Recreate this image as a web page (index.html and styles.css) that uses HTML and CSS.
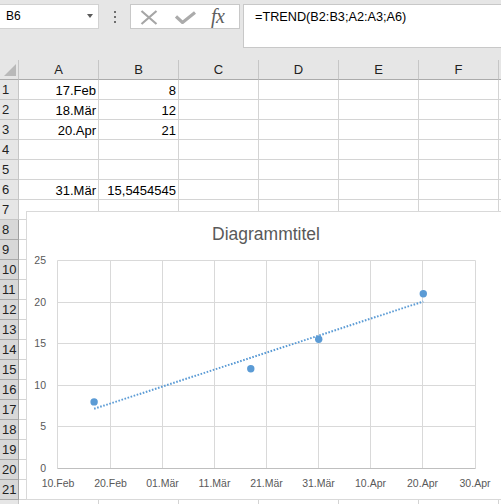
FILE: index.html
```html
<!DOCTYPE html>
<html lang="de">
<head>
<meta charset="utf-8">
<title>Excel TREND</title>
<link rel="stylesheet" href="styles.css">
</head>
<body>
<div class="app">
  <div class="toolbar">
    <div class="namebox">
      <span class="nb-text">B6</span>
      <span class="nb-arrow"></span>
    </div>
    <div class="sep">
      <svg width="4" height="12" viewBox="0 0 4 12"><rect x="1" y="0" width="2" height="2" fill="#6e6e6e"/><rect x="1" y="5" width="2" height="2" fill="#6e6e6e"/><rect x="1" y="10" width="2" height="2" fill="#6e6e6e"/></svg>
    </div>
    <div class="iconbox">
      <svg class="ic-x" width="18" height="15" viewBox="0 0 18 15"><path d="M1.5 1 L16.5 14 M16.5 1 L1.5 14" stroke="#a6a6a6" stroke-width="2.2" fill="none"/></svg>
      <svg class="ic-check" width="21" height="13" viewBox="0 0 21 13"><path d="M1 5.5 L7.5 11.5 L20 1.5" stroke="#ababab" stroke-width="3.2" fill="none"/></svg>
      <span class="ic-fx">fx</span>
    </div>
    <div class="formula">=TREND(B2:B3;A2:A3;A6)</div>
  </div>

  <div class="sheet">
    <div class="grid">
      <div class="corner"><svg width="19" height="19" viewBox="0 0 19 19"><polygon points="4,16 16,16 16,4" fill="#b9b9b9"/></svg></div>
      <div class="ch">A</div><div class="ch">B</div><div class="ch">C</div><div class="ch">D</div><div class="ch">E</div><div class="ch">F</div><div class="ch"></div>

      <div class="rh">1</div><div class="c">17.Feb</div><div class="c">8</div><div class="c"></div><div class="c"></div><div class="c"></div><div class="c"></div><div class="c"></div>
      <div class="rh">2</div><div class="c">18.Mär</div><div class="c">12</div><div class="c"></div><div class="c"></div><div class="c"></div><div class="c"></div><div class="c"></div>
      <div class="rh">3</div><div class="c">20.Apr</div><div class="c">21</div><div class="c"></div><div class="c"></div><div class="c"></div><div class="c"></div><div class="c"></div>
      <div class="rh">4</div><div class="c"></div><div class="c"></div><div class="c"></div><div class="c"></div><div class="c"></div><div class="c"></div><div class="c"></div>
      <div class="rh">5</div><div class="c"></div><div class="c"></div><div class="c"></div><div class="c"></div><div class="c"></div><div class="c"></div><div class="c"></div>
      <div class="rh">6</div><div class="c">31.Mär</div><div class="c">15,5454545</div><div class="c"></div><div class="c"></div><div class="c"></div><div class="c"></div><div class="c"></div>
      <div class="rh">7</div><div class="c"></div><div class="c"></div><div class="c"></div><div class="c"></div><div class="c"></div><div class="c"></div><div class="c"></div>
      <div class="rh hl">8</div><div class="c"></div><div class="c"></div><div class="c"></div><div class="c"></div><div class="c"></div><div class="c"></div><div class="c"></div>
      <div class="rh hl">9</div><div class="c"></div><div class="c"></div><div class="c"></div><div class="c"></div><div class="c"></div><div class="c"></div><div class="c"></div>
      <div class="rh hl">10</div><div class="c"></div><div class="c"></div><div class="c"></div><div class="c"></div><div class="c"></div><div class="c"></div><div class="c"></div>
      <div class="rh hl">11</div><div class="c"></div><div class="c"></div><div class="c"></div><div class="c"></div><div class="c"></div><div class="c"></div><div class="c"></div>
      <div class="rh hl">12</div><div class="c"></div><div class="c"></div><div class="c"></div><div class="c"></div><div class="c"></div><div class="c"></div><div class="c"></div>
      <div class="rh hl">13</div><div class="c"></div><div class="c"></div><div class="c"></div><div class="c"></div><div class="c"></div><div class="c"></div><div class="c"></div>
      <div class="rh hl">14</div><div class="c"></div><div class="c"></div><div class="c"></div><div class="c"></div><div class="c"></div><div class="c"></div><div class="c"></div>
      <div class="rh hl">15</div><div class="c"></div><div class="c"></div><div class="c"></div><div class="c"></div><div class="c"></div><div class="c"></div><div class="c"></div>
      <div class="rh hl">16</div><div class="c"></div><div class="c"></div><div class="c"></div><div class="c"></div><div class="c"></div><div class="c"></div><div class="c"></div>
      <div class="rh hl">17</div><div class="c"></div><div class="c"></div><div class="c"></div><div class="c"></div><div class="c"></div><div class="c"></div><div class="c"></div>
      <div class="rh hl">18</div><div class="c"></div><div class="c"></div><div class="c"></div><div class="c"></div><div class="c"></div><div class="c"></div><div class="c"></div>
      <div class="rh hl">19</div><div class="c"></div><div class="c"></div><div class="c"></div><div class="c"></div><div class="c"></div><div class="c"></div><div class="c"></div>
      <div class="rh hl">20</div><div class="c"></div><div class="c"></div><div class="c"></div><div class="c"></div><div class="c"></div><div class="c"></div><div class="c"></div>
      <div class="rh hl">21</div><div class="c"></div><div class="c"></div><div class="c"></div><div class="c"></div><div class="c"></div><div class="c"></div><div class="c"></div>
      <div class="rh"></div><div class="c"></div><div class="c"></div><div class="c"></div><div class="c"></div><div class="c"></div><div class="c"></div><div class="c"></div>
    </div>

    <svg class="chart" width="480" height="289" viewBox="0 0 480 289">
      <rect x="0.5" y="0.5" width="479" height="288" fill="#ffffff" stroke="#d9d9d9"/>
      <text class="title" x="240" y="29" text-anchor="middle">Diagrammtitel</text>
      <g stroke="#d9d9d9" stroke-width="1" fill="none">
        <path d="M31.5 49.5 H449.5 M31.5 91.5 H449.5 M31.5 132.5 H449.5 M31.5 174.5 H449.5 M31.5 215.5 H449.5"/>
        <path d="M31.5 49.5 V257.5 M84.5 49.5 V257.5 M136.5 49.5 V257.5 M188.5 49.5 V257.5 M240.5 49.5 V257.5 M292.5 49.5 V257.5 M344.5 49.5 V257.5 M396.5 49.5 V257.5 M449.5 49.5 V257.5"/>
      </g>
      <path d="M31.5 257.5 H449.5" stroke="#bfbfbf" stroke-width="1"/>
      <g class="ylab" text-anchor="end">
        <text x="20" y="53">25</text>
        <text x="20" y="95">20</text>
        <text x="20" y="136">15</text>
        <text x="20" y="178">10</text>
        <text x="20" y="219">5</text>
        <text x="20" y="261">0</text>
      </g>
      <g class="xlab" text-anchor="middle">
        <text x="32" y="276">10.Feb</text>
        <text x="84.5" y="276">20.Feb</text>
        <text x="136.5" y="276">01.Mär</text>
        <text x="188.5" y="276">11.Mär</text>
        <text x="240.5" y="276">21.Mär</text>
        <text x="292.5" y="276">31.Mär</text>
        <text x="344.5" y="276">10.Apr</text>
        <text x="396.5" y="276">20.Apr</text>
        <text x="449" y="276">30.Apr</text>
      </g>
      <g fill="#5b9bd5">
        <circle cx="68.1" cy="190.9" r="3.7"/>
        <circle cx="224.8" cy="157.7" r="3.7"/>
        <circle cx="397.3" cy="82.8" r="3.7"/>
        <circle cx="292.7" cy="128.2" r="3.7"/>
      </g>
      <line x1="68.1" y1="197.8" x2="397.3" y2="90.5" stroke="#5b9bd5" stroke-width="2" stroke-dasharray="1.6 1.6"/>
    </svg>
  </div>
</div>
</body>
</html>
```

FILE: styles.css
```css
html, body {
  margin: 0;
  padding: 0;
  background: #e6e6e6;
  overflow: hidden;
}

body {
  width: 501px;
  height: 504px;
  font-family: "Liberation Sans", Arial, sans-serif;
  color: #000;
}

.app {
  width: 501px;
  height: 504px;
  overflow: hidden;
}

/* ---------- toolbar / formula bar ---------- */
.toolbar {
  height: 60px;
  background: #e6e6e6;
  display: flex;
  align-items: flex-start;
  padding-top: 4px;
  box-sizing: border-box;
}

.toolbar > * {
  flex: none;
}

.namebox {
  width: 99px;
  height: 25px;
  box-sizing: border-box;
  background: #fff;
  border: 1px solid #d2d2d2;
  border-left: none;
  display: flex;
  align-items: flex-start;
  justify-content: space-between;
}

.nb-text {
  font-size: 12px;
  line-height: 14px;
  padding-top: 4px;
  padding-left: 6px;
  color: #000;
}

.nb-arrow {
  width: 0;
  height: 0;
  margin-top: 9px;
  margin-right: 5px;
  border-left: 3.5px solid transparent;
  border-right: 3.5px solid transparent;
  border-top: 4px solid #5a5a5a;
}

.sep {
  width: 31px;
  display: flex;
  justify-content: center;
  padding-top: 7px;
  box-sizing: border-box;
}

.iconbox {
  width: 110px;
  height: 25px;
  box-sizing: border-box;
  background: #fff;
  border: 1px solid #c8c8c8;
  display: flex;
  align-items: center;
}

.ic-x {
  margin-left: 9px;
  margin-top: 1px;
}

.ic-check {
  margin-left: 17px;
  margin-top: 2px;
}

.ic-fx {
  margin-left: 15px;
  font-family: "Liberation Serif", "Times New Roman", serif;
  font-style: italic;
  font-size: 20px;
  line-height: 20px;
  color: #5e5e5e;
  letter-spacing: -0.5px;
  margin-top: -1px;
}

.formula {
  margin-left: 3px;
  width: 300px;
  height: 44px;
  box-sizing: border-box;
  background: #fff;
  border: 1px solid #c8c8c8;
  border-right: none;
  padding-left: 11px;
  padding-top: 5px;
  font-size: 12.7px;
  line-height: 14px;
  color: #000;
  white-space: nowrap;
}

/* ---------- sheet ---------- */
.sheet {
  position: relative;
  background: #fff;
  height: 444px;
}

.grid {
  display: grid;
  grid-template-columns: 19px repeat(7, 80px);
  grid-auto-rows: 20px;
  width: 579px;
}

.corner {
  background: #e6e6e6;
  border-right: 1px solid #c6c6c6;
  border-bottom: 1px solid #ababab;
  box-sizing: border-box;
  line-height: 0;
}

.ch {
  background: #e6e6e6;
  border-right: 1px solid #c6c6c6;
  border-bottom: 1px solid #ababab;
  box-sizing: border-box;
  text-align: center;
  font-size: 13px;
  line-height: 19px;
  color: #222;
}

.rh {
  background: #e6e6e6;
  border-right: 1px solid #c6c6c6;
  border-bottom: 1px solid #c6c6c6;
  box-sizing: border-box;
  font-size: 13px;
  line-height: 19px;
  padding-left: 2px;
  color: #222;
  overflow: hidden;
  white-space: nowrap;
}

.rh.hl {
  background: #d8d8d8;
  border-right-color: #9f9f9f;
  border-bottom-color: #a9a9a9;
}

.c {
  background: #fff;
  border-right: 1px solid #d4d4d4;
  border-bottom: 1px solid #d4d4d4;
  box-sizing: border-box;
  font-size: 13px;
  line-height: 19px;
  padding-top: 1px;
  padding-right: 2px;
  text-align: right;
  white-space: nowrap;
  overflow: hidden;
}

/* ---------- chart ---------- */
.chart {
  position: absolute;
  left: 26px;
  top: 151px;
  font-family: "Liberation Sans", Arial, sans-serif;
}

.chart .title {
  font-size: 17.5px;
  fill: #595959;
}

.chart .ylab text,
.chart .xlab text {
  font-size: 10.5px;
  fill: #595959;
}
```
